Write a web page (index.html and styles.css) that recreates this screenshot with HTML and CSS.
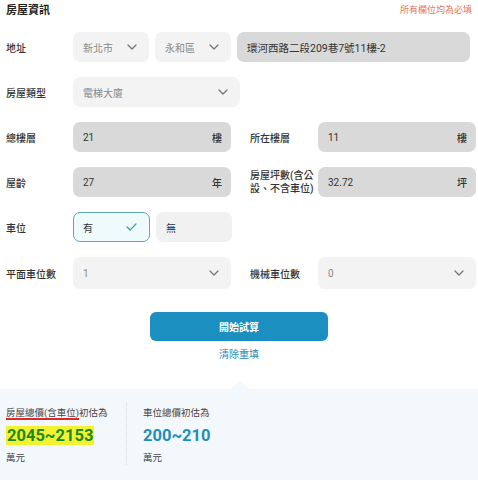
FILE: index.html
```html
<!DOCTYPE html>
<html lang="zh-Hant">
<head>
<meta charset="utf-8">
<title>房屋資訊</title>
<link rel="stylesheet" href="styles.css">
</head>
<body>
<div class="page">
  <header class="head">
    <h1 class="title">房屋資訊</h1>
    <span class="req">所有欄位均為必填</span>
  </header>

  <div class="form">
    <div class="row">
      <span class="lbl">地址</span>
      <div class="field sel w76"><span>新北市</span><svg class="chev" viewBox="0 0 10 6"><path d="M1 1l4 4 4-4"/></svg></div>
      <div class="field sel w76"><span>永和區</span><svg class="chev" viewBox="0 0 10 6"><path d="M1 1l4 4 4-4"/></svg></div>
      <div class="field inp waddr"><span>環河西路二段209巷7號11樓-2</span></div>
    </div>

    <div class="row">
      <span class="lbl">房屋類型</span>
      <div class="field sel w167"><span>電梯大廈</span><svg class="chev" viewBox="0 0 10 6"><path d="M1 1l4 4 4-4"/></svg></div>
    </div>

    <div class="row">
      <span class="lbl">總樓層</span>
      <div class="field inp w158"><span>21</span><span class="unit">樓</span></div>
      <span class="lbl lbl-r">所在樓層</span>
      <div class="field inp w158"><span>11</span><span class="unit">樓</span></div>
    </div>

    <div class="row">
      <span class="lbl">屋齡</span>
      <div class="field inp w158"><span>27</span><span class="unit">年</span></div>
      <span class="lbl lbl-r two">房屋坪數(含公設、不含車位)</span>
      <div class="field inp w158"><span>32.72</span><span class="unit">坪</span></div>
    </div>

    <div class="row">
      <span class="lbl">車位</span>
      <div class="field opt on w77"><span>有</span><svg class="check" viewBox="0 0 12 9"><path d="M1 4.5l3.5 3.5 6.5-7"/></svg></div>
      <div class="field opt w76"><span>無</span></div>
    </div>

    <div class="row row-tall">
      <span class="lbl">平面車位數</span>
      <div class="field sel w158"><span>1</span><svg class="chev" viewBox="0 0 10 6"><path d="M1 1l4 4 4-4"/></svg></div>
      <span class="lbl lbl-r">機械車位數</span>
      <div class="field sel w158"><span>0</span><svg class="chev" viewBox="0 0 10 6"><path d="M1 1l4 4 4-4"/></svg></div>
    </div>
  </div>

  <div class="actions">
    <button class="btn" type="button">開始試算</button>
    <a class="reset" href="#">清除重填</a>
  </div>

  <section class="result">
    <div class="res-col">
      <div class="res-lbl"><span class="ul">房屋總價(含車位)</span>初估為</div>
      <div class="res-num green"><span class="hl">2045~2153</span></div>
      <div class="res-unit">萬元</div>
    </div>
    <div class="divider"></div>
    <div class="res-col">
      <div class="res-lbl">車位總價初估為</div>
      <div class="res-num blue">200~210</div>
      <div class="res-unit">萬元</div>
    </div>
  </section>
</div>
</body>
</html>
```

FILE: styles.css
```css
* { box-sizing: border-box; }
html, body { margin: 0; padding: 0; background: #fff; }
body {
  font-family: Roboto, "Noto Sans CJK TC", sans-serif;
  color: #333;
  font-size: 10px;
}
.page { width: 478px; height: 480px; overflow: hidden; }

.head {
  display: flex;
  justify-content: space-between;
  align-items: center;
  height: 18px;
  padding: 0 6px;
}
.title { margin: 0; font-size: 11px; font-weight: 700; color: #222; }
.req { font-size: 9px; color: #e8735f; }

.form {
  display: flex;
  flex-direction: column;
  gap: 15px;
  padding: 14px 0 0 6px;
}
.row { display: flex; align-items: center; height: 30px; }
.row-tall { height: 32px; }
.row-tall .field { height: 32px; }

.lbl { width: 67px; flex: none; font-weight: 500; color: #333; }
.lbl-r { margin-left: 19px; width: 68px; }
.two { line-height: 13px; }

.field {
  display: flex;
  align-items: center;
  justify-content: space-between;
  height: 30px;
  border-radius: 7px;
  padding: 0 12px 0 10px;
  flex: none;
}
.field + .field { margin-left: 6px; }
.sel { background: #f3f3f3; color: #888; }
.inp { background: #d9d9d9; color: #333; padding-right: 9px; }
.opt { background: #f1f1f1; color: #333; }
.opt.on { background: #effafc; border: 1px solid #5ea8b4; padding-left: 9px; }

.w76 { width: 76px; }
.w77 { width: 77px; }
.w158 { width: 158px; }
.w167 { width: 167px; }
.waddr { width: 233px; font-size: 10.5px; }
.unit { font-weight: 500; }

.chev { width: 10px; height: 6px; fill: none; stroke: #777; stroke-width: 1.3; stroke-linecap: round; stroke-linejoin: round; }
.check { width: 11px; height: 8px; fill: none; stroke: #3f9c9c; stroke-width: 1.5; stroke-linecap: round; stroke-linejoin: round; }

.actions {
  display: flex;
  flex-direction: column;
  align-items: center;
  padding-top: 23px;
}
.btn {
  width: 178px;
  height: 29px;
  border: none;
  border-radius: 6px;
  background: #1b8fbf;
  color: #fff;
  font-family: inherit;
  font-size: 10px;
  font-weight: 700;
}
.reset {
  margin-top: 7px;
  color: #2a8db8;
  text-decoration: none;
  font-size: 10px;
  line-height: 14px;
}

.result {
  position: relative;
  margin-top: 27px;
  height: 100px;
  background: #f2f8fc;
  display: flex;
  padding: 17px 0 0 6px;
}
.result::before {
  content: "";
  position: absolute;
  top: -9px;
  left: 231px;
  border-left: 9px solid transparent;
  border-right: 9px solid transparent;
  border-bottom: 9px solid #f2f8fc;
}
.res-col { display: flex; flex-direction: column; }
.res-col:first-child { width: 120px; }
.divider {
  width: 0;
  height: 62px;
  border-left: 1px dotted #d8dde2;
  margin-right: 16px;
  margin-top: -3px;
}
.res-lbl { font-size: 9.5px; line-height: 14px; color: #444; }
.ul { text-decoration: underline; text-decoration-color: #e02828; text-decoration-thickness: 1.5px; text-underline-offset: 2px; }
.res-num { font-size: 16.5px; font-weight: 700; line-height: 22px; margin-top: 5px; }
.green { color: #1c8a24; }
.hl { background: #f2f232; padding: 0 1px; }
.blue { color: #1d8fb8; }
.res-unit { font-size: 9.5px; line-height: 14px; color: #444; margin-top: 4px; }
```
